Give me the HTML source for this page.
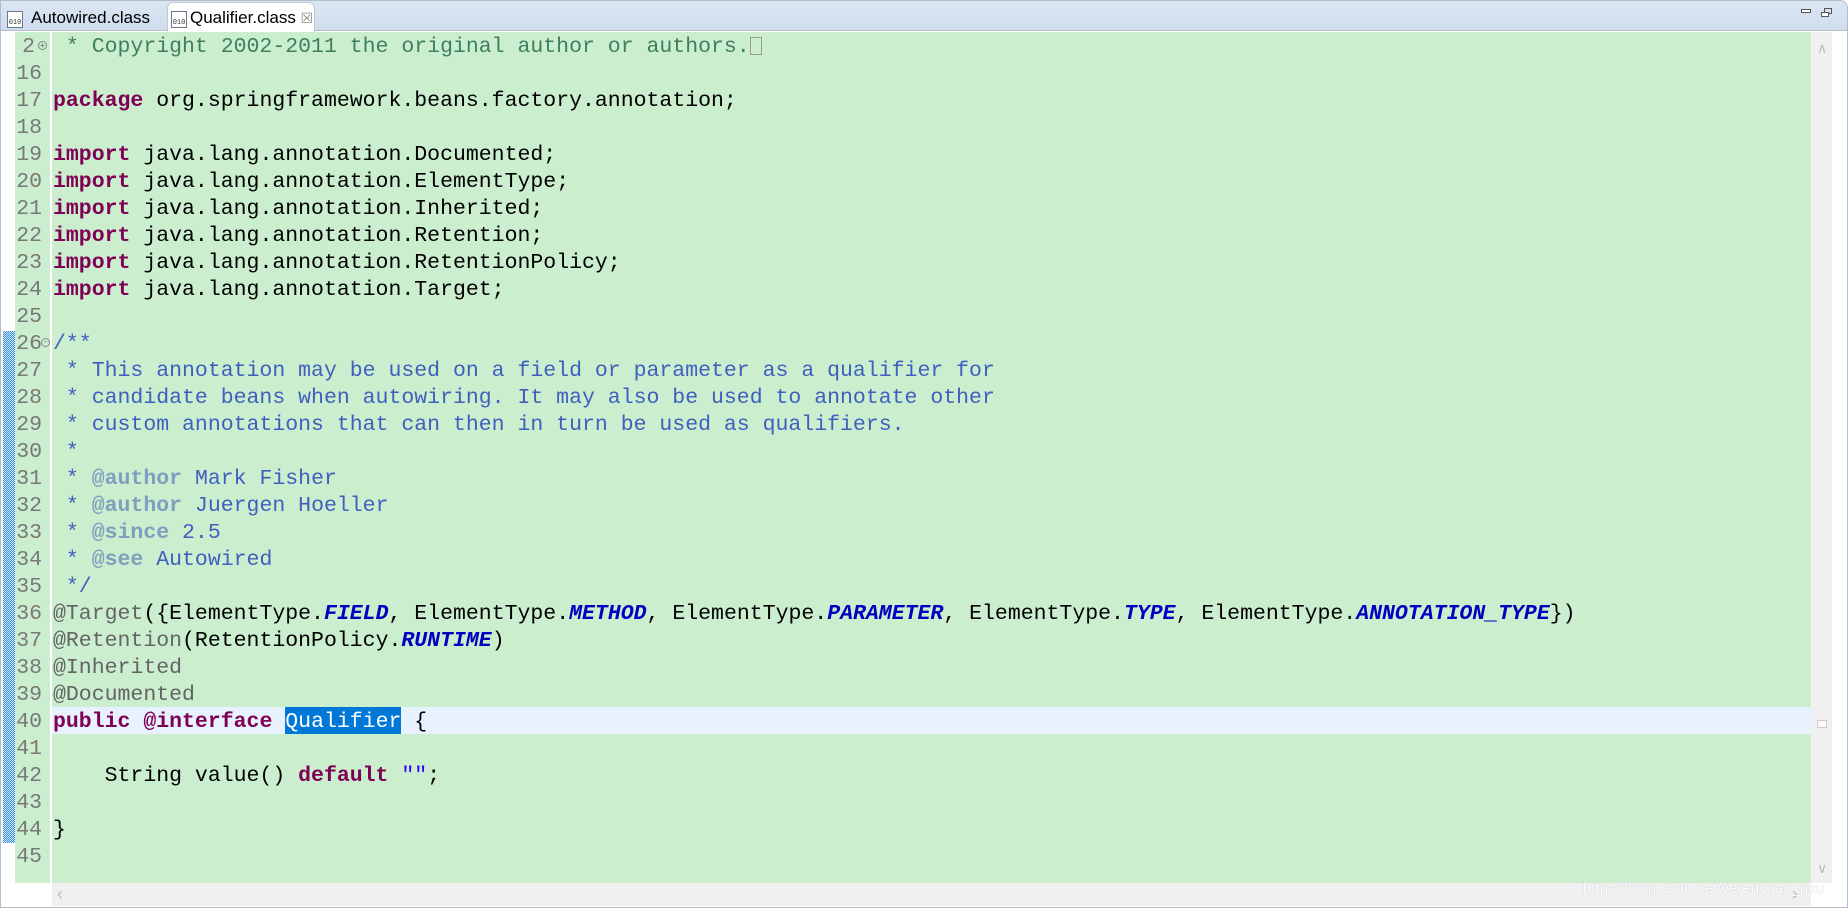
<!DOCTYPE html>
<html><head><meta charset="utf-8"><style>
*{margin:0;padding:0;box-sizing:border-box}
body{width:1848px;height:908px;overflow:hidden;background:#fff;position:relative;font-family:"Liberation Sans",sans-serif}
#tabs{position:absolute;left:0;top:0;width:1848px;height:31px;background:linear-gradient(#dbe6f3,#cfdded);border:1px solid #b4bcca;border-bottom:1px solid #b4bcca;border-radius:0 8px 0 0}
.tab{position:absolute;top:4px;height:27px;font-size:17px;color:#000;line-height:26px;padding-left:30px}
.tab.act{top:1px;height:30px;background:#fff;border:1px solid #c0c8d4;border-bottom:none;border-radius:6px 6px 0 0;line-height:30px}
.ic{position:absolute;left:6px;top:6px;width:16px;height:17px;border:1px solid #6a7a8a;background:#fff;font-size:7px;line-height:22px;text-align:center;color:#333;font-family:"Liberation Mono",monospace}
.act .ic{top:8px}
#ed{position:absolute;left:0;top:31px;width:1848px;height:877px;border-left:1px solid #b4bcca;border-right:1px solid #b4bcca;border-bottom:1px solid #b4bcca}
#green{position:absolute;left:15px;top:32px;width:1796px;height:851px;background:#cbeecf}
#sep{position:absolute;left:50px;top:32px;width:2px;height:851px;background:#fff}
#cur{position:absolute;left:52px;top:707px;width:1759px;height:27px;background:#e8f2fe}
#bar{position:absolute;left:3px;top:331px;width:12px;height:512px;background:repeating-conic-gradient(#3d8fe0 0 25%,#cfe4fb 0 50%) 0 0/2px 2px}
#vs{position:absolute;left:1811px;top:32px;width:21px;height:851px;background:#f0f0f0}
#hs{position:absolute;left:52px;top:883px;width:1759px;height:23px;background:#f0f0f0}
.ln{position:absolute;left:0;width:42px;text-align:right;color:#787878;font-family:"Liberation Mono",monospace;font-size:21.5px;line-height:27px;padding-top:2px}
.cd{position:absolute;left:53px;white-space:pre;font-family:"Liberation Mono",monospace;font-size:21.5px;line-height:27px;color:#000;padding-top:2px}
.k{color:#7f0055;font-weight:bold}.c{color:#3f7f5f}.j{color:#3f5fbf}.t{color:#7f9fbf;font-weight:bold}.a{color:#646464}.f{color:#0000c0;font-style:italic;font-weight:bold}.s{color:#2a00ff}
.sel{background:#0078d7;color:#fff}
#wm{position:absolute;left:1583px;top:880px;font-size:15px;color:#fff;opacity:.9;text-shadow:0 0 1px #aaa}
</style></head><body>
<div id="tabs">
<div class="tab" style="left:0;width:160px"><span class="ic">010</span>Autowired.class</div>
<div class="tab act" style="left:166px;width:148px;padding-left:22px"><span class="ic" style="left:3px">010</span>Qualifier.class <span style="color:#888;font-size:14px">&#x2612;</span></div>
<div style="position:absolute;left:1800px;top:8px;width:10px;height:4px;border:1px solid #555;background:#fff"></div>
<div style="position:absolute;left:1823px;top:7px;width:8px;height:6px;border:1px solid #555"></div>
<div style="position:absolute;left:1820px;top:11px;width:8px;height:5px;border:1px solid #555;background:#fff"></div>
</div>
<div id="ed"></div>
<div id="green"></div>
<div id="vs"><div style="position:absolute;left:6px;top:8px;color:#bbb;font-size:14px">&#x2227;</div><div style="position:absolute;left:6px;top:688px;width:10px;height:8px;border:1px solid #ccc;background:#fafafa"></div><div style="position:absolute;left:6px;top:828px;color:#bbb;font-size:14px">&#x2228;</div></div>
<div id="hs"><div style="position:absolute;left:5px;top:1px;color:#bbb;font-size:18px">&lsaquo;</div><div style="position:absolute;left:1740px;top:1px;color:#bbb;font-size:18px">&rsaquo;</div></div>
<div id="cur"></div>
<div id="sep"></div>
<div id="bar"></div>
<div style="position:absolute;left:0;top:32px">
<div class="ln" style="top:0;width:35px">2</div><div style="position:absolute;left:38px;top:9px;width:9px;height:9px;border:1px solid #888;border-radius:50%;font-size:8px;line-height:7px;text-align:center;color:#555">+</div>
<div class="ln" style="top:27px">16</div><div class="ln" style="top:54px">17</div><div class="ln" style="top:81px">18</div><div class="ln" style="top:108px">19</div><div class="ln" style="top:135px">20</div><div class="ln" style="top:162px">21</div><div class="ln" style="top:189px">22</div><div class="ln" style="top:216px">23</div><div class="ln" style="top:243px">24</div><div class="ln" style="top:270px">25</div><div class="ln" style="top:297px">26</div><div style="position:absolute;left:41px;top:306px;width:9px;height:9px;border:1px solid #888;border-radius:50%;font-size:8px;line-height:6px;text-align:center;color:#555">-</div><div class="ln" style="top:324px">27</div><div class="ln" style="top:351px">28</div><div class="ln" style="top:378px">29</div><div class="ln" style="top:405px">30</div><div class="ln" style="top:432px">31</div><div class="ln" style="top:459px">32</div><div class="ln" style="top:486px">33</div><div class="ln" style="top:513px">34</div><div class="ln" style="top:540px">35</div><div class="ln" style="top:567px">36</div><div class="ln" style="top:594px">37</div><div class="ln" style="top:621px">38</div><div class="ln" style="top:648px">39</div><div class="ln" style="top:675px">40</div><div class="ln" style="top:702px">41</div><div class="ln" style="top:729px">42</div><div class="ln" style="top:756px">43</div><div class="ln" style="top:783px">44</div><div class="ln" style="top:810px">45</div>
<div class="cd" style="top:0"><span class="c"> * Copyright 2002-2011 the original author or authors.</span><span style="display:inline-block;width:12px;height:18px;border:1px solid #999;vertical-align:-3px"></span></div>
<div class="cd" style="top:54px"><span class="k">package</span> org.springframework.beans.factory.annotation;</div>
<div class="cd" style="top:108px"><span class="k">import</span> java.lang.annotation.Documented;</div>
<div class="cd" style="top:135px"><span class="k">import</span> java.lang.annotation.ElementType;</div>
<div class="cd" style="top:162px"><span class="k">import</span> java.lang.annotation.Inherited;</div>
<div class="cd" style="top:189px"><span class="k">import</span> java.lang.annotation.Retention;</div>
<div class="cd" style="top:216px"><span class="k">import</span> java.lang.annotation.RetentionPolicy;</div>
<div class="cd" style="top:243px"><span class="k">import</span> java.lang.annotation.Target;</div>
<div class="cd j" style="top:297px">/**</div>
<div class="cd j" style="top:324px"> * This annotation may be used on a field or parameter as a qualifier for</div>
<div class="cd j" style="top:351px"> * candidate beans when autowiring. It may also be used to annotate other</div>
<div class="cd j" style="top:378px"> * custom annotations that can then in turn be used as qualifiers.</div>
<div class="cd j" style="top:405px"> *</div>
<div class="cd j" style="top:432px"> * <span class="t">@author</span> Mark Fisher</div>
<div class="cd j" style="top:459px"> * <span class="t">@author</span> Juergen Hoeller</div>
<div class="cd j" style="top:486px"> * <span class="t">@since</span> 2.5</div>
<div class="cd j" style="top:513px"> * <span class="t">@see</span> Autowired</div>
<div class="cd j" style="top:540px"> */</div>
<div class="cd" style="top:567px"><span class="a">@Target</span>({ElementType.<span class="f">FIELD</span>, ElementType.<span class="f">METHOD</span>, ElementType.<span class="f">PARAMETER</span>, ElementType.<span class="f">TYPE</span>, ElementType.<span class="f">ANNOTATION_TYPE</span>})</div>
<div class="cd" style="top:594px"><span class="a">@Retention</span>(RetentionPolicy.<span class="f">RUNTIME</span>)</div>
<div class="cd a" style="top:621px">@Inherited</div>
<div class="cd a" style="top:648px">@Documented</div>
<div class="cd" style="top:675px;padding-top:0"><span style="display:inline-block;padding-top:2px"><span class="k">public</span> <span class="k">@interface</span> </span><span class="sel" style="display:inline-block;padding-top:2px;height:27px">Qualifier</span> {</div>
<div class="cd" style="top:729px">    String value() <span class="k">default</span> <span class="s">""</span>;</div>
<div class="cd" style="top:783px">}</div>
</div>
<div id="wm">https://blog.csdn.net/yerenyuan_pku</div>
</body></html>
